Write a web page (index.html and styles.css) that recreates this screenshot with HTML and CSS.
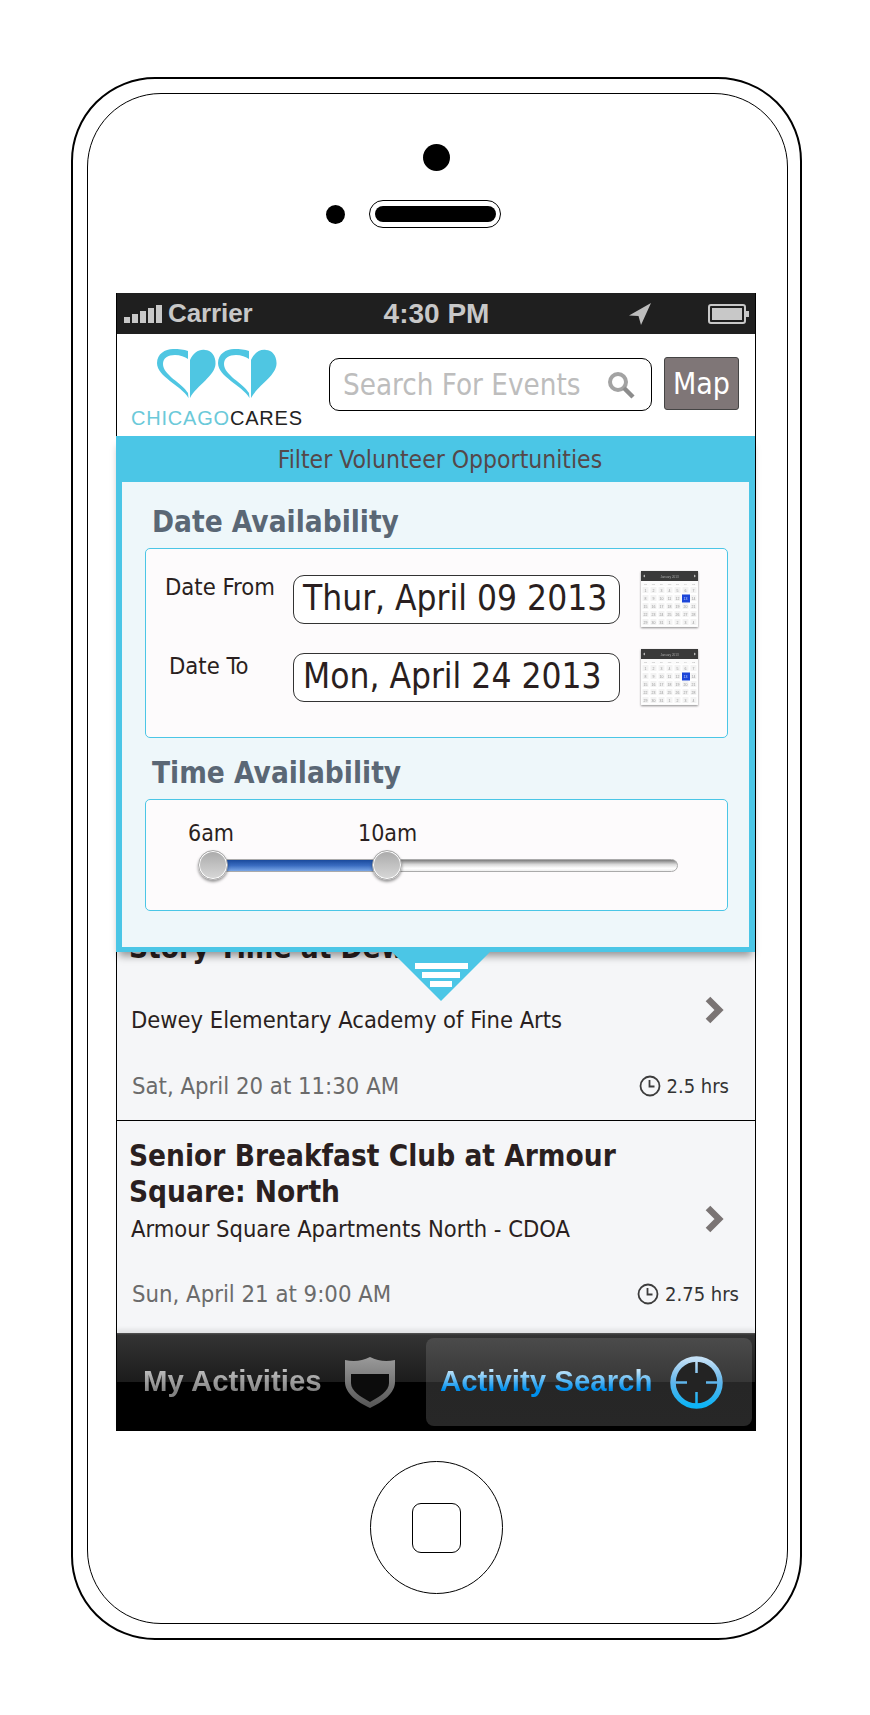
FILE: index.html
```html
<!DOCTYPE html>
<html lang="en">
<head>
    <meta charset="UTF-8">
    <title>Chicago Cares</title>
    <link rel="stylesheet" href="styles.css">
</head>
<body>

    <svg width="0" height="0" class="defs">
        <symbol id="clock" viewBox="0 0 22 22">
            <circle cx="11" cy="11" r="9.500" fill="none" stroke="#3c3c3c" stroke-width="1.800"/>
            <path d="M10.500 5v6.500h5" fill="none" stroke="#3c3c3c" stroke-width="1.800"/>
        </symbol>
        <symbol id="chevron" viewBox="0 0 20 28">
            <path d="M3 3l11 11-11 11" fill="none" stroke="#7a7474" stroke-width="6.500"/>
        </symbol>
        <symbol id="heart" viewBox="0 0 59 49">
            <path d="M31.500 49C24 36 0 28 0 14 0 5 8 0 16 0c6 0 11 .5 15 2v8c-3-2-8-4-13-4C11 6 6 9 6 15c0 11 19 19 25 29z" fill="#4fc6e2"/>
            <path d="M33 11c3-7 9-11 15-10 6 0 11 6 10.500 14C58 27 40 36 33 49z" fill="#4fc6e2"/>
        </symbol>
    </svg>

    <div class="phone">
        <div class="phone-inner">
            <div class="camera"></div>
            <div class="earpiece">
                <div class="mic"></div>
                <div class="speaker"><div class="speaker-slot"></div></div>
            </div>

            <div class="screen">
                <div class="status-bar">
                    <div class="signal"><span></span><span></span><span></span><span></span><span></span></div>
                    <span class="carrier">Carrier</span>
                    <span class="clock-time">4:30 PM</span>
                    <svg class="nav-arrow" width="22" height="22" viewBox="0 0 22 22"><path d="M22 0L0 12.500l9.500.5L12 22z" fill="#bdbdbd"/></svg>
                    <svg class="battery" width="42" height="20" viewBox="0 0 42 20">
                        <rect x="1" y="1" width="36" height="18" rx="2" fill="none" stroke="#c8c8c8" stroke-width="2"/>
                        <rect x="4" y="4" width="30" height="12" fill="#c8c8c8"/>
                        <rect x="38" y="7" width="3" height="6" fill="#c8c8c8"/>
                    </svg>
                </div>

                <div class="header">
                    <div class="logo">
                        <div class="logo-hearts">
                            <svg width="59" height="49"><use href="#heart"/></svg>
                            <svg width="59" height="49"><use href="#heart"/></svg>
                        </div>
                        <div class="logo-name"><span class="logo-city">CHICAGO</span>CARES</div>
                    </div>
                    <div class="search">
                        <span class="search-text">Search For Events</span>
                        <svg width="28" height="28" viewBox="0 0 28 28"><circle cx="11" cy="11" r="8" fill="none" stroke="#a3a3a3" stroke-width="4"/><path d="M17 17l9 9" stroke="#8c8c8c" stroke-width="4.500"/></svg>
                    </div>
                    <div class="map-btn">Map</div>
                </div>

                <div class="list">
                    <div class="item item-first">
                        <div class="item-title">Story Time at Dewey</div>
                        <div class="item-place">
                            <span>Dewey Elementary Academy of Fine Arts</span>
                            <svg class="chevron" width="20" height="28"><use href="#chevron"/></svg>
                        </div>
                        <div class="item-foot">
                            <span class="item-date">Sat, April 20 at 11:30 AM</span>
                            <span class="item-hours short"><svg width="22" height="22"><use href="#clock"/></svg>2.5 hrs</span>
                        </div>
                    </div>
                    <div class="item">
                        <div class="item-title">Senior Breakfast Club at Armour Square: North</div>
                        <div class="item-place">
                            <span>Armour Square Apartments North - CDOA</span>
                            <svg class="chevron" width="20" height="28"><use href="#chevron"/></svg>
                        </div>
                        <div class="item-foot">
                            <span class="item-date">Sun, April 21 at 9:00 AM</span>
                            <span class="item-hours"><svg width="22" height="22"><use href="#clock"/></svg>2.75 hrs</span>
                        </div>
                    </div>
                </div>

                <div class="tab-bar">
                    <div class="tab">
                        <span class="tab-label">My Activities</span>
                        <svg width="52" height="52" viewBox="0 0 52 52">
                            <defs><linearGradient id="shieldFill" x1="0" y1="0" x2="0" y2="1"><stop offset="0" stop-color="#9a9a9a"/><stop offset="1" stop-color="#555"/></linearGradient></defs>
                            <path d="M1 4c9 2 17 1 25-3 8 4 16 5 25 3v22c0 11-12 20-25 26C13 46 1 37 1 26z" fill="url(#shieldFill)"/>
                            <path d="M7 18h38v9c0 8-10 14-19 19-9-5-19-11-19-19z" fill="#0c0c0c"/>
                        </svg>
                    </div>
                    <div class="tab tab-active">
                        <span class="tab-label">Activity Search</span>
                        <svg width="53" height="53" viewBox="0 0 53 53">
                            <defs><linearGradient id="ringFill" x1="0" y1="0" x2="0" y2="1"><stop offset="0" stop-color="#c4e0f6"/><stop offset=".5" stop-color="#5fb4ea"/><stop offset="1" stop-color="#0cb4f6"/></linearGradient></defs>
                            <circle cx="26.500" cy="26.500" r="23.500" fill="#232323" stroke="url(#ringFill)" stroke-width="5.500"/>
                            <path d="M26.500 4v13M26.500 36v13M4 26.500h13M36 26.500h13" stroke="url(#ringFill)" stroke-width="2.500"/>
                        </svg>
                    </div>
                </div>

                <div class="filter">
                    <div class="filter-title">Filter Volunteer Opportunities</div>
                    <div class="filter-body">
                        <h2 class="section-title">Date Availability</h2>
                        <div class="box box-dates">
                            <div class="date-row">
                                <span class="date-label">Date From</span>
                                <div class="date-input">Thur, April 09 2013</div>
                                <svg class="cal-icon" width="59" height="58" viewBox="0 0 59 58">
                                    <g id="calArt">
                                        <rect x="1" y="1" width="57" height="56" fill="#fbfbfb"/>
                                        <rect x="1" y="1" width="57" height="10" fill="#3a3a3a"/>
                                        <text x="29.500" y="7.500" class="cal-month">January 2013</text>
                                        <path d="M5 4.500l-2 1.500 2 1.500zM54 4.500l2 1.500-2 1.500z" fill="#bbb"/>
                                        <g class="cal-names">
                                            <text x="5.500" y="15">Su</text><text x="13.500" y="15">Mo</text><text x="21.500" y="15">Tu</text><text x="29.500" y="15">We</text><text x="37.500" y="15">Th</text><text x="45.500" y="15">Fr</text><text x="53.500" y="15">Sa</text>
                                        </g>
                                        <path fill="#f3f3f3" stroke="#fff" d="M2 16.500h7v7h-7zM10 16.500h7v7h-7zM18 16.500h7v7h-7zM26 16.500h7v7h-7zM34 16.500h7v7h-7zM42 16.500h7v7h-7zM50 16.500h7v7h-7zM2 24.500h7v7h-7zM10 24.500h7v7h-7zM18 24.500h7v7h-7zM26 24.500h7v7h-7zM34 24.500h7v7h-7zM50 24.500h7v7h-7zM2 32.500h7v7h-7zM10 32.500h7v7h-7zM18 32.500h7v7h-7zM26 32.500h7v7h-7zM34 32.500h7v7h-7zM42 32.500h7v7h-7zM50 32.500h7v7h-7zM2 40.500h7v7h-7zM10 40.500h7v7h-7zM18 40.500h7v7h-7zM26 40.500h7v7h-7zM34 40.500h7v7h-7zM42 40.500h7v7h-7zM50 40.500h7v7h-7zM2 48.500h7v7h-7zM10 48.500h7v7h-7zM18 48.500h7v7h-7zM26 48.500h7v7h-7zM34 48.500h7v7h-7zM42 48.500h7v7h-7zM50 48.500h7v7h-7z"/>
                                        <rect x="42" y="24.500" width="8" height="8" fill="#1d46d8"/>
                                        <g class="cal-day">
                                            <text x="5.500" y="21.500">1</text><text x="13.500" y="21.500">2</text><text x="21.500" y="21.500">3</text><text x="29.500" y="21.500">4</text><text x="37.500" y="21.500">5</text><text x="45.500" y="21.500">6</text><text x="53.500" y="21.500">7</text>
                                            <text x="5.500" y="29.500">8</text><text x="13.500" y="29.500">9</text><text x="21.500" y="29.500">10</text><text x="29.500" y="29.500">11</text><text x="37.500" y="29.500">12</text><text x="45.500" y="29.500" fill="#cdd8ff">13</text><text x="53.500" y="29.500">14</text>
                                            <text x="5.500" y="37.500">15</text><text x="13.500" y="37.500">16</text><text x="21.500" y="37.500">17</text><text x="29.500" y="37.500">18</text><text x="37.500" y="37.500">19</text><text x="45.500" y="37.500">20</text><text x="53.500" y="37.500">21</text>
                                            <text x="5.500" y="45.500">22</text><text x="13.500" y="45.500">23</text><text x="21.500" y="45.500">24</text><text x="29.500" y="45.500">25</text><text x="37.500" y="45.500">26</text><text x="45.500" y="45.500">27</text><text x="53.500" y="45.500">28</text>
                                            <text x="5.500" y="53.500">29</text><text x="13.500" y="53.500">30</text><text x="21.500" y="53.500">31</text><text x="29.500" y="53.500">1</text><text x="37.500" y="53.500">2</text><text x="45.500" y="53.500">3</text><text x="53.500" y="53.500">4</text>
                                        </g>
                                    </g>
                                </svg>
                            </div>
                            <div class="date-row">
                                <span class="date-label date-label-to">Date To</span>
                                <div class="date-input">Mon, April 24 2013</div>
                                <svg class="cal-icon" width="59" height="58" viewBox="0 0 59 58"><use href="#calArt"/></svg>
                            </div>
                        </div>
                        <h2 class="section-title">Time Availability</h2>
                        <div class="box box-time">
                            <div class="time-labels"><span>6am</span><span>10am</span></div>
                            <div class="slider">
                                <div class="slider-fill"></div>
                                <div class="thumb thumb-from"></div>
                                <div class="thumb thumb-to"></div>
                            </div>
                        </div>
                    </div>
                    <div class="filter-tab">
                        <span class="grip grip-1"></span>
                        <span class="grip grip-2"></span>
                        <span class="grip grip-3"></span>
                    </div>
                </div>
            </div>

            <div class="home-btn"><div class="home-square"></div></div>
        </div>
    </div>

</body>
</html>
```

FILE: styles.css
```css
* {
    box-sizing: border-box;
}

body {
    margin: 0;
    background: #fff;
    font-family: "DejaVu Sans Condensed", "DejaVu Sans", sans-serif;
    color: #2a1f20;
}

.defs {
    position: absolute;
}

.cal-month {
    font: 3px "Liberation Sans", sans-serif;
    fill: #aaa;
    text-anchor: middle;
}

.cal-names {
    font: 2.500px "Liberation Sans", sans-serif;
    fill: #aaa;
    text-anchor: middle;
}

.cal-day {
    font: 3.500px "Liberation Sans", sans-serif;
    fill: #999;
    text-anchor: middle;
}

/* phone outline */
.phone {
    width: 731px;
    height: 1563px;
    margin: 77px 0 0 71px;
    padding: 14px 12px 14px 14px;
    border: 2px solid #000;
    border-radius: 84px;
}

.phone-inner {
    display: flex;
    flex-direction: column;
    align-items: flex-start;
    height: 100%;
    padding-left: 28px;
    border: 1px solid #000;
    border-radius: 74px;
}

.camera {
    width: 27px;
    height: 27px;
    margin: 50px 0 0 307px;
    border-radius: 50%;
    background: #000;
}

.earpiece {
    display: flex;
    align-items: center;
    gap: 24px;
    margin: 29px 0 0 210px;
}

.mic {
    width: 19px;
    height: 19px;
    border-radius: 50%;
    background: #000;
}

.speaker {
    display: flex;
    align-items: center;
    justify-content: center;
    width: 132px;
    height: 28px;
    border: 1px solid #000;
    border-radius: 14px;
}

.speaker-slot {
    width: 121px;
    height: 16px;
    border-radius: 8px;
    background: #000;
}

.home-btn {
    display: flex;
    align-items: center;
    justify-content: center;
    width: 133px;
    height: 133px;
    margin: 30px 0 0 254px;
    border: 1px solid #000;
    border-radius: 50%;
}

.home-square {
    width: 49px;
    height: 50px;
    border: 1px solid #000;
    border-radius: 9px;
}

/* screen */
.screen {
    position: relative;
    display: flex;
    flex-direction: column;
    width: 640px;
    height: 1138px;
    margin-top: 65px;
    border-left: 1px solid #000;
    border-right: 1px solid #000;
}

.status-bar {
    display: flex;
    align-items: center;
    height: 41px;
    padding-left: 7px;
    background: #1f1f1f;
    color: #c8c8c8;
    font-family: "Liberation Sans", sans-serif;
    font-weight: 700;
}

.signal {
    display: flex;
    align-items: flex-end;
    gap: 2px;
    height: 18px;
}

.signal span {
    width: 6px;
    background: #c8c8c8;
}

.signal span:nth-child(1) { height: 6px; }
.signal span:nth-child(2) { height: 9px; }
.signal span:nth-child(3) { height: 12px; }
.signal span:nth-child(4) { height: 15px; }
.signal span:nth-child(5) { height: 18px; }

.carrier {
    margin-left: 6px;
    font-size: 26px;
    letter-spacing: -0.1px;
}

.clock-time {
    margin-left: 131px;
    font-size: 28px;
}

.nav-arrow {
    margin-left: 140px;
}

.battery {
    margin-left: 57px;
}

.header {
    display: flex;
    align-items: flex-start;
    height: 102px;
    padding-left: 14px;
    background: #fff;
}

.logo {
    width: 171px;
    padding-top: 15px;
}

.logo-hearts {
    display: flex;
    justify-content: center;
    gap: 2px;
    height: 49px;
    padding-left: 1px;
}

.logo-name {
    margin-top: 10px;
    font: 20px/20px "Liberation Sans", sans-serif;
    letter-spacing: 0.8px;
    color: #222;
    white-space: nowrap;
}

.logo-city {
    color: #6bc9d9;
}

.search {
    display: flex;
    align-items: center;
    justify-content: space-between;
    width: 323px;
    height: 53px;
    margin: 24px 0 0 27px;
    padding: 0 16px 0 13px;
    border: 1px solid #000;
    border-radius: 10px;
}

.search-text {
    font-size: 29.300px;
    color: #bdbdbd;
}

.map-btn {
    width: 75px;
    height: 53px;
    margin: 23px 0 0 12px;
    border: 1px solid #444;
    border-radius: 3px;
    background: #7f7677;
    color: #fff;
    font-size: 30px;
    line-height: 51px;
    text-align: center;
}

/* event list */
.list {
    flex: 1;
    display: flex;
    flex-direction: column;
    justify-content: flex-end;
    overflow: hidden;
    background: #f5f6f8;
}

.item {
    flex: none;
    padding: 17px 16px 24px 12px;
    border-top: 1px solid #000;
}

.item-first {
    padding-bottom: 19px;
}

.item-title {
    width: 510px;
    font-size: 29.500px;
    font-weight: 700;
    line-height: 36px;
}

.item-place {
    display: flex;
    align-items: flex-start;
    justify-content: space-between;
    height: 30px;
    margin-top: 4px;
    padding: 0 14px 0 2px;
    font-size: 23.500px;
    line-height: 30px;
}

.item-first .item-place {
    margin-top: 39px;
}

.chevron {
    margin-top: -9px;
}

.item-foot {
    display: flex;
    align-items: center;
    justify-content: space-between;
    height: 30px;
    margin-top: 35px;
    padding-left: 3px;
    font-size: 23.700px;
}

.item-first .item-foot {
    margin-top: 36px;
}

.item-date {
    color: #6b6b6b;
}

.item-hours {
    display: flex;
    align-items: center;
    gap: 6px;
    font-size: 20px;
    color: #333;
}

.item-hours.short {
    margin-right: 10px;
}

/* tab bar */
.tab-bar {
    position: relative;
    display: flex;
    justify-content: space-between;
    height: 98px;
    padding: 5px 3px 5px 26px;
    background: linear-gradient(#565656 0, #333 2px, #1c1c1c 50%, #000 50%, #000 100%);
    box-shadow: 0 -4px 4px rgba(0, 0, 0, 0.08);
    font-family: "Liberation Sans", sans-serif;
    font-weight: 700;
    font-size: 29.400px;
}

.tab {
    display: flex;
    align-items: center;
    gap: 22px;
}

.tab-label {
    margin-bottom: 2px;
    background: linear-gradient(#bcbcbc 20%, #828282 80%);
    -webkit-background-clip: text;
    background-clip: text;
    color: transparent;
}

.tab-active {
    gap: 18px;
    width: 326px;
    padding-left: 14px;
    border-radius: 8px;
    background: linear-gradient(#4b4b4b, #373737 50%, #262626 50%, #272727);
}

.tab-active .tab-label {
    background-image: linear-gradient(#c0e4fa 20%, #0090ee 75%);
}

/* filter panel */
.filter {
    position: absolute;
    z-index: 1;
    top: 143px;
    left: -1px;
    right: 0;
    padding: 0 6px 5px;
    background: #4bc6e6;
    box-shadow: 0 7px 8px -3px rgba(0, 0, 0, 0.4);
}

.filter-title {
    height: 46px;
    padding-left: 9px;
    color: #55484a;
    font-size: 24.500px;
    line-height: 48px;
    text-align: center;
}

.filter-body {
    height: 465px;
    padding: 22px 21px 0 23px;
    background: #eef7fa;
}

.section-title {
    margin: 0 0 8px;
    padding-left: 7px;
    color: #5a6775;
    font-size: 29.500px;
    font-weight: 700;
    line-height: 36px;
}

.box {
    width: 583px;
    border: 1px solid #4bc6e6;
    border-radius: 5px;
    background: #fdfbfc;
}

.box-dates {
    height: 190px;
    margin-bottom: 17px;
    padding: 26px 0 0 19px;
}

.box-time {
    height: 112px;
    padding-top: 19px;
}

.date-row {
    display: flex;
    align-items: flex-start;
    height: 49px;
    margin-bottom: 29px;
}

.date-label {
    width: 128px;
    font-size: 23.600px;
    line-height: 24px;
}

.date-label-to {
    padding: 1px 0 0 4px;
}

.date-input {
    width: 327px;
    height: 49px;
    padding-left: 9px;
    border: 1px solid #333;
    border-radius: 11px;
    background: #fff;
    font-size: 35px;
    line-height: 45px;
    white-space: nowrap;
}

.cal-icon {
    margin: -5px 0 0 20px;
    filter: drop-shadow(0 1px 1px rgba(0, 0, 0, 0.45));
}

.time-labels {
    display: flex;
    gap: 124px;
    height: 28px;
    padding-left: 42px;
    font-size: 23px;
    line-height: 28px;
}

.slider {
    position: relative;
    width: 465px;
    height: 13px;
    margin: 12px 0 0 67px;
    border: 1px solid #aaa;
    border-radius: 7px;
    background: linear-gradient(#7c7c7c, #d8d8d8 40%, #fff 75%, #eee);
}

.slider-fill {
    width: 174px;
    height: 100%;
    border-radius: 7px 0 0 7px;
    background: linear-gradient(#1a4a9c, #3a6cc0 50%, #79a6e6);
}

.thumb {
    position: absolute;
    top: -10px;
    width: 30px;
    height: 30px;
    border: 1px solid #aaa;
    border-radius: 50%;
    background: linear-gradient(#aaa, #d8d8d8);
    box-shadow: inset 0 0 0 1px #fff, 0 2px 3px rgba(0, 0, 0, 0.4);
}

.thumb-from {
    left: -16px;
}

.thumb-to {
    left: 158px;
}

/* pointer under the panel */
.filter-tab {
    position: absolute;
    top: 516px;
    left: 276px;
    display: flex;
    flex-direction: column;
    align-items: center;
    gap: 3px;
    width: 98px;
    height: 49px;
    padding-top: 11px;
    clip-path: polygon(0 0, 100% 0, 50% 100%);
    background: #4bc6e6;
}

.grip {
    height: 6px;
    background: #fff;
}

.grip-1 { width: 53px; }
.grip-2 { width: 38px; }
.grip-3 { width: 22px; }
```
